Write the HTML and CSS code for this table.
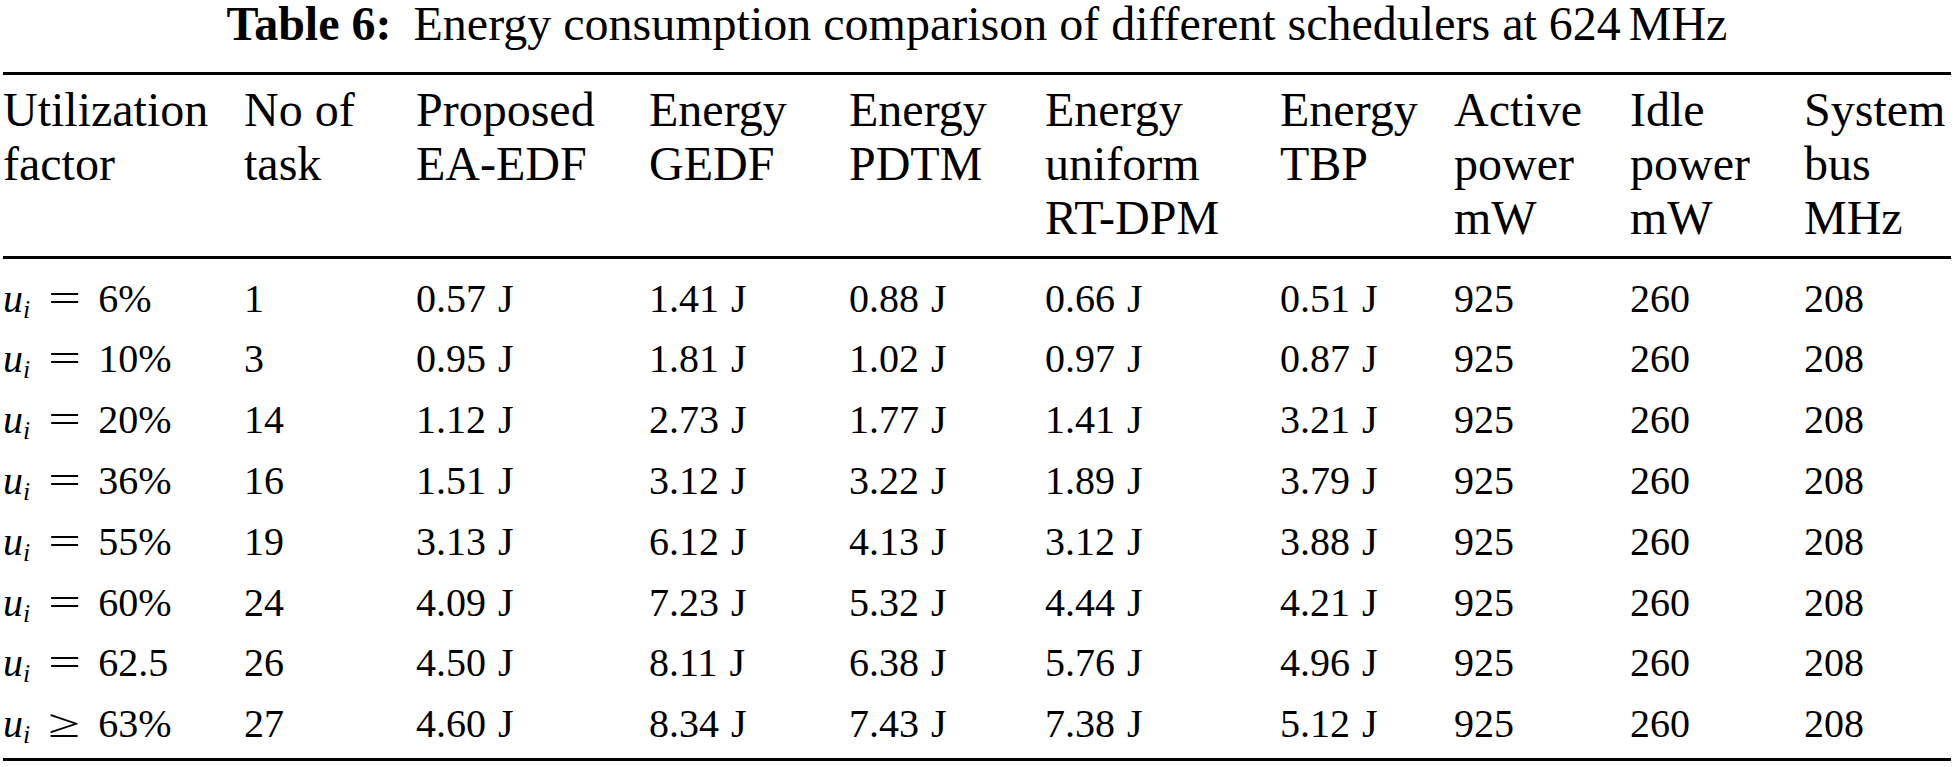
FILE: index.html
```html
<!DOCTYPE html>
<html>
<head>
<meta charset="utf-8">
<link rel="stylesheet" href="styles.css">
</head>
<body>
<div class="figure">
  <div class="caption"><b>Table 6:</b><span class="gap"></span>Energy consumption comparison of different schedulers at 624<span class="thin"></span>MHz</div>
  <table class="tbl">
    <colgroup>
      <col class="c1"><col class="c2"><col class="c3"><col class="c4"><col class="c5">
      <col class="c6"><col class="c7"><col class="c8"><col class="c9"><col class="c10">
    </colgroup>
    <thead>
      <tr>
        <th>Utilization<br>factor</th>
        <th>No of<br>task</th>
        <th>Proposed<br>EA-EDF</th>
        <th>Energy<br>GEDF</th>
        <th>Energy<br>PDTM</th>
        <th>Energy<br>uniform<br>RT-DPM</th>
        <th>Energy<br>TBP</th>
        <th>Active<br>power<br>mW</th>
        <th>Idle<br>power<br>mW</th>
        <th>System<br>bus<br>MHz</th>
      </tr>
    </thead>
    <tbody>
      <tr class="first">
        <td><i>u</i><sub>i</sub><span class="rel">=</span>6%</td><td>1</td><td>0.57<span class="j">J</span></td><td>1.41<span class="j">J</span></td><td>0.88<span class="j">J</span></td><td>0.66<span class="j">J</span></td><td>0.51<span class="j">J</span></td><td>925</td><td>260</td><td>208</td>
      </tr>
      <tr>
        <td><i>u</i><sub>i</sub><span class="rel">=</span>10%</td><td>3</td><td>0.95<span class="j">J</span></td><td>1.81<span class="j">J</span></td><td>1.02<span class="j">J</span></td><td>0.97<span class="j">J</span></td><td>0.87<span class="j">J</span></td><td>925</td><td>260</td><td>208</td>
      </tr>
      <tr>
        <td><i>u</i><sub>i</sub><span class="rel">=</span>20%</td><td>14</td><td>1.12<span class="j">J</span></td><td>2.73<span class="j">J</span></td><td>1.77<span class="j">J</span></td><td>1.41<span class="j">J</span></td><td>3.21<span class="j">J</span></td><td>925</td><td>260</td><td>208</td>
      </tr>
      <tr>
        <td><i>u</i><sub>i</sub><span class="rel">=</span>36%</td><td>16</td><td>1.51<span class="j">J</span></td><td>3.12<span class="j">J</span></td><td>3.22<span class="j">J</span></td><td>1.89<span class="j">J</span></td><td>3.79<span class="j">J</span></td><td>925</td><td>260</td><td>208</td>
      </tr>
      <tr>
        <td><i>u</i><sub>i</sub><span class="rel">=</span>55%</td><td>19</td><td>3.13<span class="j">J</span></td><td>6.12<span class="j">J</span></td><td>4.13<span class="j">J</span></td><td>3.12<span class="j">J</span></td><td>3.88<span class="j">J</span></td><td>925</td><td>260</td><td>208</td>
      </tr>
      <tr>
        <td><i>u</i><sub>i</sub><span class="rel">=</span>60%</td><td>24</td><td>4.09<span class="j">J</span></td><td>7.23<span class="j">J</span></td><td>5.32<span class="j">J</span></td><td>4.44<span class="j">J</span></td><td>4.21<span class="j">J</span></td><td>925</td><td>260</td><td>208</td>
      </tr>
      <tr>
        <td><i>u</i><sub>i</sub><span class="rel">=</span>62.5</td><td>26</td><td>4.50<span class="j">J</span></td><td>8.11<span class="j">J</span></td><td>6.38<span class="j">J</span></td><td>5.76<span class="j">J</span></td><td>4.96<span class="j">J</span></td><td>925</td><td>260</td><td>208</td>
      </tr>
      <tr class="last">
        <td><i>u</i><sub>i</sub><span class="rel">&#8805;</span>63%</td><td>27</td><td>4.60<span class="j">J</span></td><td>8.34<span class="j">J</span></td><td>7.43<span class="j">J</span></td><td>7.38<span class="j">J</span></td><td>5.12<span class="j">J</span></td><td>925</td><td>260</td><td>208</td>
      </tr>
    </tbody>
  </table>
</div>
</body>
</html>
```
FILE: styles.css
```css
html, body {
  margin: 0;
  padding: 0;
  background: #ffffff;
}

body {
  font-family: "Liberation Serif", "Times New Roman", serif;
  color: #000000;
}

.figure {
  width: 1954px;
}

.caption {
  font-size: 48px;
  line-height: 48px;
  text-align: center;
  white-space: nowrap;
  margin-bottom: 24px;
}

.caption b {
  font-weight: bold;
}

.caption .gap {
  display: inline-block;
  width: 22px;
}

.caption .thin {
  display: inline-block;
  width: 8px;
}

.tbl {
  margin-left: 3px;
  width: 1948px;
  table-layout: fixed;
  border-collapse: separate;
  border-spacing: 0;
}

.c1 { width: 241px; }
.c2 { width: 172px; }
.c3 { width: 233px; }
.c4 { width: 200px; }
.c5 { width: 196px; }
.c6 { width: 235px; }
.c7 { width: 174px; }
.c8 { width: 176px; }
.c9 { width: 174px; }
.c10 { width: 147px; }

.tbl th {
  font-weight: normal;
  font-size: 48px;
  line-height: 54px;
  text-align: left;
  vertical-align: top;
  padding: 8px 0 11px 0;
  border-top: 3px solid #000;
  border-bottom: 3px solid #000;
  white-space: nowrap;
}

.tbl td {
  font-size: 40px;
  line-height: 60.8px;
  padding: 0;
  text-align: left;
  vertical-align: top;
  white-space: nowrap;
}

.tbl tr.first td {
  padding-top: 9.6px;
}

.tbl tr.last td {
  padding-bottom: 3px;
  border-bottom: 3px solid #000;
}

.tbl i {
  font-style: italic;
}

.tbl sub {
  font-size: 26px;
  font-style: italic;
  line-height: 0;
  vertical-align: -6px;
}

.j {
  margin-left: 12px;
}

.rel {
  display: inline-block;
  width: 33px;
  margin: 0 17px 0 18px;
  text-align: center;
  transform: scaleX(1.45);
}
```
